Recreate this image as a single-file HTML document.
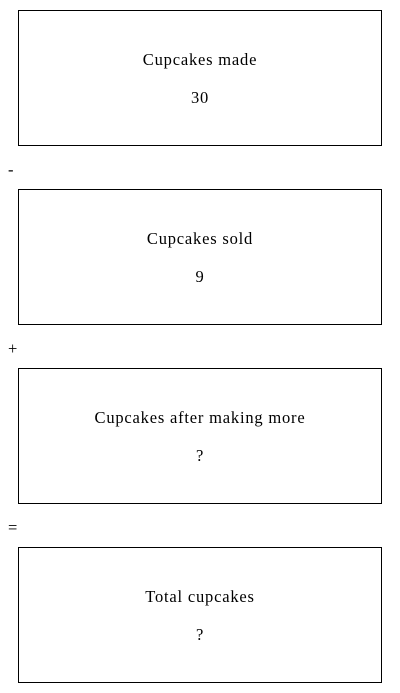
<!DOCTYPE html>
<html><head><meta charset="utf-8"><style>
body{margin:0;width:400px;height:693px;background:#fff;font-family:"Liberation Serif",serif;font-size:16.5px;letter-spacing:0.8px;color:#000;position:relative;overflow:hidden}
.b{position:absolute;left:18px;width:362px;height:134px;border:1px solid #000;text-align:center}
.b .t{position:absolute;left:0;right:0;top:39px;line-height:20px}
.b .n{position:absolute;left:0;right:0;top:77px;line-height:20px}
.o{position:absolute;left:8px;line-height:20px}
</style></head><body>
<div class="b" style="top:10px"><div class="t">Cupcakes made</div><div class="n">30</div></div>
<div class="o" style="top:160px">-</div>
<div class="b" style="top:189px"><div class="t">Cupcakes sold</div><div class="n">9</div></div>
<div class="o" style="top:339px">+</div>
<div class="b" style="top:368px"><div class="t">Cupcakes after making more</div><div class="n">?</div></div>
<div class="o" style="top:518px">=</div>
<div class="b" style="top:547px"><div class="t">Total cupcakes</div><div class="n">?</div></div>
</body></html>
